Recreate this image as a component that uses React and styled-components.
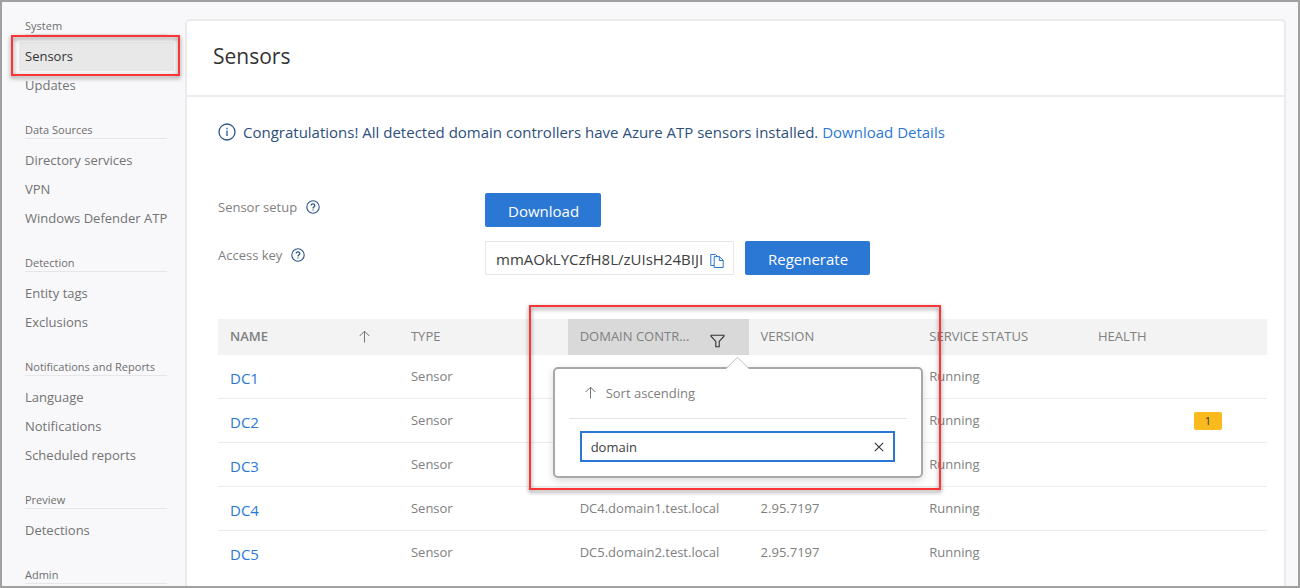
import React, { useState } from "react";
import styled, { createGlobalStyle, css } from "styled-components";

const GlobalStyle = createGlobalStyle`
  *, *::before, *::after { box-sizing: border-box; }
  body {
    margin: 0;
    background: #f8f8fa;
    color: #6e6e6e;
    font-family: "Open Sans", "Noto Sans", sans-serif;
    font-size: 13px;
    line-height: 20px;
  }
  button, input { font: inherit; color: inherit; }
  a { text-decoration: none; }
`;

const Frame = styled.div`
  display: flex;
  min-height: 100vh;
  border: 2px solid #a0a0a0;
`;

/* Sidebar */

const Sidebar = styled.nav`
  flex: 0 0 183px;
  padding: 16px 9px 0 17px;
`;

const Section = styled.section`
  margin-bottom: 22px;

  &:last-child {
    margin-bottom: 0;
  }
`;

const SectionTitle = styled.h2`
  margin: 0 9px 7px 6px;
  border-bottom: 1px solid #e6e6e8;
  font-size: 11px;
  font-weight: 400;
  line-height: 16px;

  ${Section}:last-child & {
    margin-bottom: 0;
  }
`;

const NavList = styled.ul`
  margin: 0;
  padding: 0;
  list-style: none;
`;

const NavItem = styled.li`
  position: relative;
  margin-right: 2px;
`;

const NavLink = styled.a`
  display: block;
  padding-left: 6px;
  color: ${(p) => (p.$active ? "#333" : "#737373")};
  background: ${(p) => (p.$active ? "#e8e8e8" : "transparent")};
  line-height: 29px;
  white-space: nowrap;
`;

/* Red call-out drawn over the page */

const Callout = styled.span`
  position: absolute;
  z-index: 3;
  border: 2px solid #fa3535;
  pointer-events: none;
  filter: drop-shadow(0 2px 2px rgba(0, 0, 0, 0.5));
`;

const NavCallout = styled(Callout)`
  inset: -7px -6px -5px -8px;
`;

const FilterCallout = styled(Callout)`
  top: -14px;
  left: -39px;
  width: 412px;
  height: 185px;
`;

/* Main card */

const Card = styled.main`
  flex: 1;
  min-width: 0;
  margin: 17px 12px 0 0;
  border: 2px solid #ebebeb;
  border-bottom: 0;
  border-radius: 5px 5px 0 0;
  background: #fff;
`;

const CardHeader = styled.header`
  padding: 18px 26px 21px;
  border-bottom: 2px solid #ebebeb;
`;

const Title = styled.h1`
  margin: 0;
  color: #333;
  font-size: 21px;
  font-weight: 400;
  line-height: 35px;
`;

const CardBody = styled.div`
  padding: 23px 17px 8px 31px;
`;

const Notice = styled.p`
  display: flex;
  align-items: center;
  gap: 7px;
  margin: 0 0 49px;
  color: #2d4f7c;
  font-size: 15px;
  line-height: 24px;
`;

const TextLink = styled.a`
  color: #2b78d8;
`;

const FieldRow = styled.div`
  display: grid;
  grid-template-columns: 267px auto auto;
  justify-content: start;
  align-items: center;
  margin-bottom: ${(p) => (p.$last ? "44px" : "14px")};
`;

const FieldLabel = styled.div`
  display: flex;
  align-items: center;
  gap: 9px;
  padding-bottom: 6px;
  color: #808080;
`;

const PrimaryButton = styled.button`
  height: 34px;
  padding: 2px 22px 0 23px;
  border: 0;
  border-radius: 2px;
  background: #2b77d4;
  color: #fff;
  font-size: 15px;
  font-weight: 500;
`;

const KeyBox = styled.div`
  display: flex;
  align-items: center;
  width: 249px;
  height: 34px;
  margin-right: 11px;
  border: 1px solid #e8e8e8;
`;

const KeyInput = styled.input`
  flex: 1;
  min-width: 0;
  padding: 2px 0 0 10px;
  border: 0;
  outline: 0;
  background: none;
  color: #404040;
  font-size: 15px;
`;

const IconButton = styled.button`
  display: flex;
  padding: ${(p) => (p.$low ? "5px 9px 0 6px" : "0 9px")};
  border: 0;
  background: none;
`;

/* Table */

const Table = styled.table`
  width: 100%;
  border-collapse: separate;
  border-spacing: 0;
  table-layout: fixed;
`;

const HeadCell = styled.th`
  position: relative;
  width: ${(p) => (p.$wide ? "17.25%" : "16.08%")};
  height: 36px;
  padding: 0 12px 2px;
  background: ${(p) => (p.$active ? "#d9d9d9" : "#f3f3f3")};
  color: #808080;
  font-weight: ${(p) => (p.$bold ? 600 : 400)};
  text-align: left;
`;

const HeadContent = styled.div`
  display: flex;
  align-items: center;
  justify-content: space-between;
  padding-right: ${(p) => (p.$sorted ? "17px" : "12px")};
  white-space: nowrap;
`;

const FilterButton = styled.button`
  display: flex;
  padding: 9px 0 0;
  border: 0;
  background: none;
`;

const Row = styled.tr`
  &:not(:last-child) > td {
    border-bottom: 1px solid #ededed;
  }
`;

const Cell = styled.td`
  height: 44px;
  padding: 0 12px 2px;
  color: #808080;
  ${(p) =>
    p.$name &&
    css`
      padding-top: 2px;
      padding-bottom: 0;
      font-size: 15px;
    `}
  ${(p) =>
    p.$health &&
    css`
      padding-right: 45px;
      text-align: right;
    `}
`;

const Badge = styled.span`
  display: inline-block;
  width: 28px;
  border-radius: 2px;
  background: #fab91c;
  color: #333;
  font-size: 11px;
  line-height: 18px;
  text-align: center;
`;

/* Filter popover */

const Popover = styled.div`
  position: absolute;
  z-index: 2;
  top: 48px;
  left: -15px;
  width: 370px;
  padding: 0 14px 14px;
  border: 2px solid #a8a8a8;
  border-radius: 5px;
  background: #fff;
  box-shadow: 0 3px 8px rgba(0, 0, 0, 0.15);
`;

const Pointer = styled.svg`
  position: absolute;
  top: -13px;
  left: 170px;
`;

const SortButton = styled.button`
  display: flex;
  align-items: center;
  gap: 10px;
  width: 100%;
  height: 50px;
  padding: 0 16px 2px;
  border: 0;
  border-bottom: 1px solid #e4e4e4;
  background: none;
`;

const FilterField = styled.div`
  display: flex;
  align-items: center;
  height: 31px;
  margin: 12px 12px 0 11px;
  border: 2px solid #2b77d4;
`;

const FilterInput = styled.input`
  flex: 1;
  min-width: 0;
  padding: 0 0 0 9px;
  border: 0;
  outline: 0;
  background: none;
  color: #404040;
`;

/* Icons */

const InfoIcon = () => (
  <svg width="18" height="18" viewBox="0 0 18 18" fill="none" stroke="#2d5587" strokeWidth="1.3" aria-hidden="true">
    <circle cx="9" cy="9" r="8" />
    <path d="M9 7.5v5.5M9 4.8v1.4" />
  </svg>
);

const HelpIcon = () => (
  <svg width="14" height="14" viewBox="0 0 14 14" fill="none" stroke="#2d5587" strokeWidth="1.1" aria-hidden="true">
    <circle cx="7" cy="7" r="6.2" />
    <path d="M5.2 5.5c0-1 .8-1.7 1.8-1.7s1.8.7 1.8 1.6c0 1.3-1.8 1.5-1.8 3M7 9.4v1.2" strokeWidth="1.3" />
  </svg>
);

const CopyIcon = () => (
  <svg width="14" height="16" viewBox="0 0 14 16" fill="none" stroke="#2b77d4" aria-hidden="true">
    <path d="M4 12.5H.8V1.5h4.7L7.5 3.5" />
    <path d="M4.2 3.6h5.3l3.7 3.7v7.2H4.2zM9.3 3.8v3.7h3.8" />
  </svg>
);

const ArrowUp = () => (
  <svg width="11" height="13" viewBox="0 0 11 13" fill="none" stroke="#737373" aria-hidden="true">
    <path d="M5.5 12.5V1.2M.7 6 5.5 1.2 10.3 6" />
  </svg>
);

const FunnelIcon = () => (
  <svg width="15" height="14" viewBox="0 0 15 14" fill="none" stroke="#333" strokeWidth="1.1" aria-hidden="true">
    <path d="M1 1.2h13v1L9.2 7.4v5.4H5.8V7.4L1 2.2z" />
  </svg>
);

const CloseIcon = () => (
  <svg width="10" height="10" viewBox="0 0 10 10" fill="none" stroke="#333" strokeWidth="1.1" aria-hidden="true">
    <path d="M.8.8l8.4 8.4M9.2.8L.8 9.2" />
  </svg>
);

const sections = [
  { title: "System", items: ["Sensors", "Updates"] },
  { title: "Data Sources", items: ["Directory services", "VPN", "Windows Defender ATP"] },
  { title: "Detection", items: ["Entity tags", "Exclusions"] },
  { title: "Notifications and Reports", items: ["Language", "Notifications", "Scheduled reports"] },
  { title: "Preview", items: ["Detections"] },
  { title: "Admin", items: [] },
];

const sensors = [
  { name: "DC1" },
  { name: "DC2", health: 1 },
  { name: "DC3" },
  { name: "DC4", domain: "DC4.domain1.test.local", version: "2.95.7197" },
  { name: "DC5", domain: "DC5.domain2.test.local", version: "2.95.7197" },
];

function SideNav() {
  return (
    <Sidebar>
      {sections.map(({ title, items }) => (
        <Section key={title}>
          <SectionTitle>{title}</SectionTitle>
          <NavList>
            {items.map((item) => {
              const active = item === "Sensors";
              return (
                <NavItem key={item}>
                  <NavLink href="#" $active={active}>{item}</NavLink>
                  {active && <NavCallout />}
                </NavItem>
              );
            })}
          </NavList>
        </Section>
      ))}
    </Sidebar>
  );
}

function FilterPopover() {
  const [value, setValue] = useState("domain");
  return (
    <Popover>
      <Pointer width="26" height="14" viewBox="0 0 26 14" aria-hidden="true">
        <path d="M1 13 12.5 1.5 24 13v1H1z" fill="#fff" />
        <path d="M1 12.5 12.5 1.5 24 12.5" fill="none" stroke="#c4c4c4" />
      </Pointer>
      <SortButton type="button">
        <ArrowUp />
        Sort ascending
      </SortButton>
      <FilterField>
        <FilterInput aria-label="Filter domain controllers" value={value} onChange={(e) => setValue(e.target.value)} />
        <IconButton type="button" aria-label="Clear filter" onClick={() => setValue("")}>
          <CloseIcon />
        </IconButton>
      </FilterField>
    </Popover>
  );
}

function SensorTable() {
  return (
    <Table>
      <thead>
        <tr>
          <HeadCell $wide $bold>
            <HeadContent $sorted>
              NAME
              <ArrowUp />
            </HeadContent>
          </HeadCell>
          <HeadCell>TYPE</HeadCell>
          <HeadCell $wide $active>
            <HeadContent>
              DOMAIN CONTR...
              <FilterButton type="button" aria-label="Filter">
                <FunnelIcon />
              </FilterButton>
            </HeadContent>
            <FilterPopover />
            <FilterCallout />
          </HeadCell>
          <HeadCell>VERSION</HeadCell>
          <HeadCell>SERVICE STATUS</HeadCell>
          <HeadCell $wide>HEALTH</HeadCell>
        </tr>
      </thead>
      <tbody>
        {sensors.map((s) => (
          <Row key={s.name}>
            <Cell $name><TextLink href="#">{s.name}</TextLink></Cell>
            <Cell>Sensor</Cell>
            <Cell>{s.domain}</Cell>
            <Cell>{s.version}</Cell>
            <Cell>Running</Cell>
            <Cell $health>{s.health && <Badge>{s.health}</Badge>}</Cell>
          </Row>
        ))}
      </tbody>
    </Table>
  );
}

export default function App() {
  return (
    <>
      <GlobalStyle />
      <Frame>
        <SideNav />
        <Card>
          <CardHeader>
            <Title>Sensors</Title>
          </CardHeader>
          <CardBody>
            <Notice>
              <InfoIcon />
              <span>
                Congratulations! All detected domain controllers have Azure ATP sensors installed.{" "}
                <TextLink href="#">Download Details</TextLink>
              </span>
            </Notice>
            <FieldRow>
              <FieldLabel>
                <span>Sensor setup</span>
                <HelpIcon />
              </FieldLabel>
              <PrimaryButton type="button">Download</PrimaryButton>
            </FieldRow>
            <FieldRow $last>
              <FieldLabel>
                <label htmlFor="access-key">Access key</label>
                <HelpIcon />
              </FieldLabel>
              <KeyBox>
                <KeyInput id="access-key" readOnly value="mmAOkLYCzfH8L/zUIsH24BIJI" />
                <IconButton type="button" aria-label="Copy access key" $low>
                  <CopyIcon />
                </IconButton>
              </KeyBox>
              <PrimaryButton type="button">Regenerate</PrimaryButton>
            </FieldRow>
            <SensorTable />
          </CardBody>
        </Card>
      </Frame>
    </>
  );
}
